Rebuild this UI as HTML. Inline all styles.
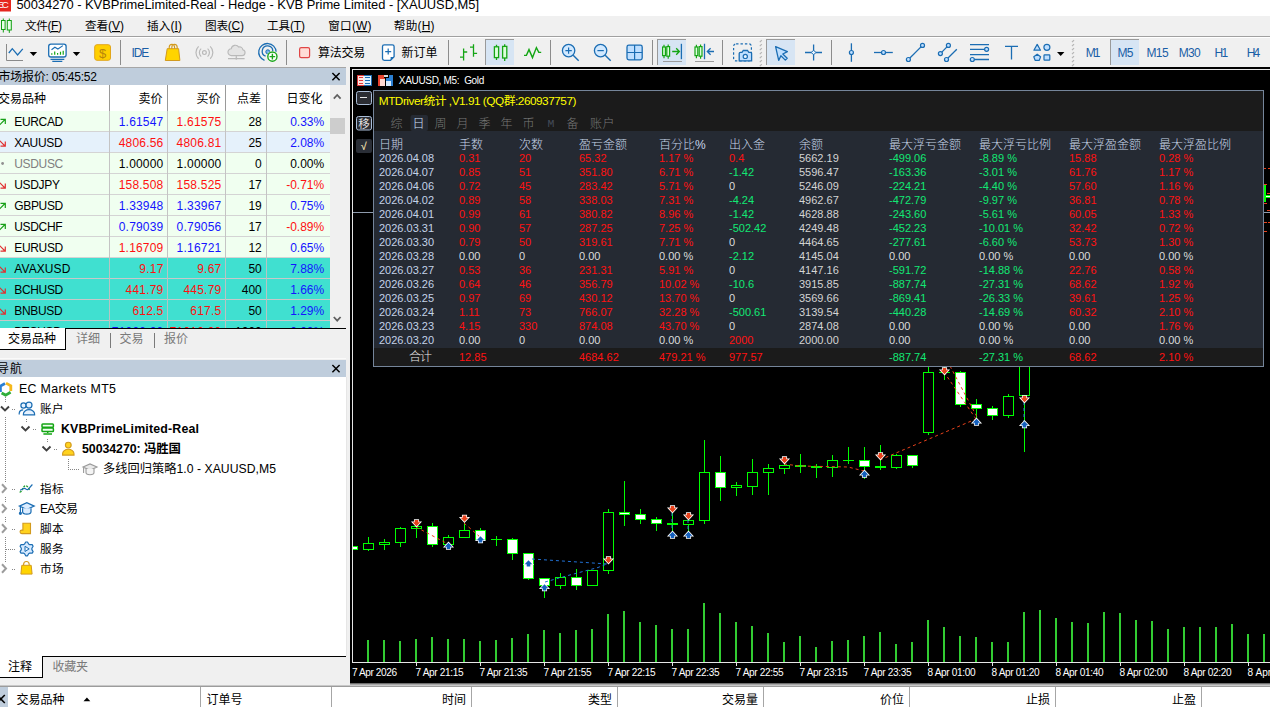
<!DOCTYPE html>
<html lang="zh-CN"><head><meta charset="utf-8"><title>50034270 - KVBPrimeLimited-Real - Hedge - KVB Prime Limited - [XAUUSD,M5]</title>
<style>html,body{margin:0;padding:0;background:#f0f0f0;overflow:hidden}body{width:1270px;height:707px}svg{display:block;font-family:"Liberation Sans","Noto Sans CJK SC",sans-serif}text{white-space:pre}</style></head>
<body>
<svg width="1270" height="707" viewBox="0 0 1270 707">
<rect x="0" y="0" width="1270" height="16" fill="#ffffff" />
<rect x="0" y="0" width="11" height="11.5" fill="#e5271f" />
<text x="-3" y="7.7" font-size="9.8" fill="#fff" textLength="11.8" lengthAdjust="spacing" >EC</text>
<text x="16.4" y="8.9" font-size="12.9" fill="#000" textLength="462.6" lengthAdjust="spacing" >50034270 - KVBPrimeLimited-Real - Hedge - KVB Prime Limited - [XAUUSD,M5]</text>
<rect x="0" y="16" width="1270" height="20" fill="#f0f0f0" />
<g fill="#e8ffe8" stroke="#12a012" stroke-width="1"><path d="M3.3 18.5v14M9.3 18.5v14.4" fill="none"/><rect x="1.5" y="20.5" width="3.6" height="9"/><rect x="7.3" y="20.5" width="4" height="9.5"/></g>
<text x="25" y="30" font-size="12" fill="#000" textLength="37" lengthAdjust="spacing" ><tspan font-size="11.6">文件</tspan>(<tspan text-decoration="underline">F</tspan>)</text>
<text x="85" y="30" font-size="12" fill="#000" textLength="39" lengthAdjust="spacing" ><tspan font-size="11.6">查看</tspan>(<tspan text-decoration="underline">V</tspan>)</text>
<text x="147" y="30" font-size="12" fill="#000" textLength="35" lengthAdjust="spacing" ><tspan font-size="11.6">插入</tspan>(<tspan text-decoration="underline">I</tspan>)</text>
<text x="205" y="30" font-size="12" fill="#000" textLength="39" lengthAdjust="spacing" ><tspan font-size="11.6">图表</tspan>(<tspan text-decoration="underline">C</tspan>)</text>
<text x="267" y="30" font-size="12" fill="#000" textLength="38" lengthAdjust="spacing" ><tspan font-size="11.6">工具</tspan>(<tspan text-decoration="underline">T</tspan>)</text>
<text x="328.3" y="30" font-size="12" fill="#000" textLength="43.3" lengthAdjust="spacing" ><tspan font-size="11.6">窗口</tspan>(<tspan text-decoration="underline">W</tspan>)</text>
<text x="393.8" y="30" font-size="12" fill="#000" textLength="40.8" lengthAdjust="spacing" ><tspan font-size="11.6">帮助</tspan>(<tspan text-decoration="underline">H</tspan>)</text>
<rect x="0" y="36" width="1270" height="1" fill="#a0a0a0" />
<rect x="0" y="37" width="1270" height="1" fill="#ffffff" />
<rect x="0" y="38" width="1270" height="29" fill="#f0f0f0" />
<path d="M6.5 44v16.5h16.5" stroke="#8a8a8a" stroke-width="1" fill="none"/>
<path d="M8.8 53l3.5 -4.3l5.3 6.2l5.2 -6" stroke="#1b6db3" stroke-width="1.3" fill="none"/>
<path d="M29.7 52l7.4 0l-3.7 4z" fill="#000"/>
<rect x="48.7" y="44.2" width="17.4" height="12.8" rx="2.2" fill="#fff" stroke="#1b6db3" stroke-width="1.3"/>
<path d="M50.5 59.4h13.8M52.3 61.3h10" stroke="#1b6db3" stroke-width="1.2" fill="none"/>
<path d="M51.5 49.8l3.4 -2.6l3 1.8l5 -3.4" stroke="#1b6db3" stroke-width="1.1" fill="none"/>
<path d="M51.8 54.8v-1.6M54.7 54.8v-3.2M57.6 54.8v-1.8M60.5 54.8v-3M63.2 54.8v-4" stroke="#14a514" stroke-width="1.2" fill="none"/>
<path d="M72.8 52l7.4 0l-3.7 4z" fill="#000"/>
<rect x="94.7" y="44.7" width="15.8" height="15.6" rx="2.3" fill="#ffcf00" stroke="#e2a61a" stroke-width="1"/>
<text x="102.6" y="57.6" font-size="13" fill="#b8860b" text-anchor="middle" >$</text>
<rect x="120" y="40" width="1" height="25" fill="#8c8c8c" />
<text x="131.6" y="56.9" font-size="12" fill="#1a5ea6" textLength="17.6" lengthAdjust="spacing" >IDE</text>
<path d="M169.2 49v-1.6a2.7 3 0 0 1 5.4 0v1.6M171.8 49v-1.6a2.7 3 0 0 1 5.4 0v1.6" stroke="#d29a1e" stroke-width="1.1" fill="none"/>
<path d="M167.2 48.7h11.4l1.3 11.8h-14.6z" fill="#ffd400" stroke="#d29a1e" stroke-width="1"/>
<g stroke="#b9b9b9" stroke-width="1.2" fill="none"><circle cx="204.4" cy="52.6" r="1.9"/><path d="M201.2 48.6a5.3 5.3 0 0 0 0 8M207.6 48.6a5.3 5.3 0 0 1 0 8M198.6 46.4a8.6 8.6 0 0 0 0 12.4M210.2 46.4a8.6 8.6 0 0 1 0 12.4"/></g>
<path d="M231.5 55.6a3.4 3.4 0 0 1 -0.3 -6.8a4.2 4.2 0 0 1 7.6 -1.7a3 3 0 0 1 4 2.6a3 3 0 0 1 -0.9 5.9z" fill="#e4e4e4" stroke="#b9b9b9" stroke-width="1.1"/>
<path d="M228 58.6h16.6M236.3 55.8v2.4" stroke="#b9b9b9" stroke-width="1.1" fill="none"/><circle cx="236.3" cy="58.6" r="1.1" fill="#b9b9b9"/>
<g stroke="#1b6db3" stroke-width="1.3" fill="none"><path d="M264.5 60.4a8.7 8.7 0 1 1 11.6 -8.6"/><path d="M265.6 56.2a5.3 5.3 0 1 1 7.2 -5.2"/></g>
<circle cx="267.8" cy="51.8" r="2" fill="#7db4ea" stroke="#1b6db3" stroke-width="1"/>
<circle cx="272.4" cy="56.6" r="5.6" fill="#fff"/><circle cx="272.4" cy="56.6" r="4.6" fill="#fff" stroke="#1aa51a" stroke-width="1.4"/>
<path d="M269.6 56.6h5.6M272.4 53.8v5.6" stroke="#1aa51a" stroke-width="1.4" fill="none"/>
<rect x="286" y="40" width="1" height="25" fill="#8c8c8c" />
<rect x="299.6" y="47.6" width="10" height="10" rx="1.6" fill="#ffdcd6" stroke="#e04545" stroke-width="1.2"/>
<text x="318" y="57" font-size="12" fill="#000" textLength="47.3" lengthAdjust="spacing" >算法交易</text>
<path d="M384.3 44.8h8a1.8 1.8 0 0 1 1.8 1.8v10.2l-3.6 3.6h-6.2a1.8 1.8 0 0 1 -1.8 -1.8v-12a1.8 1.8 0 0 1 1.8 -1.8z" fill="#fff" stroke="#1b6db3" stroke-width="1.3"/>
<path d="M394 57l-3.4 3.4v-3.4z" fill="#1b6db3"/>
<path d="M385.2 51.6h6M388.2 48.6v6" stroke="#1b6db3" stroke-width="1.2" fill="none"/>
<text x="401.5" y="57" font-size="12" fill="#000" textLength="36" lengthAdjust="spacing" >新订单</text>
<rect x="448" y="40" width="1" height="25" fill="#8c8c8c" />
<path d="M463.6 48.6v12M460 57.2h3.6M463.6 52h3.6M473.5 44.2v12.5M470 47.1h3.5M473.5 53.4h3.6" stroke="#14a514" stroke-width="1.3" fill="none"/>
<rect x="485" y="39" width="29" height="26" fill="#d7e5f4" />
<rect x="485" y="39" width="1" height="26" fill="#9a9a9a" />
<rect x="485" y="39" width="29" height="1" fill="#9a9a9a" />
<g stroke="#14a514" stroke-width="1.3" fill="#dcffdc"><path d="M496.5 44.8v15.2M504.7 44.2v16.8" fill="none"/><rect x="494.4" y="46.8" width="4.2" height="10.8"/><rect x="502.6" y="46.4" width="4.2" height="11.6"/></g>
<path d="M524 55.4h2.4l2.6 -5.8l3.5 8l3.9 -10l2.4 4.8h2.4" stroke="#14a514" stroke-width="1.4" fill="none"/>
<rect x="550" y="40" width="1" height="25" fill="#8c8c8c" />
<circle cx="568.6" cy="50.6" r="6.2" fill="#d2e9ff" stroke="#1b6db3" stroke-width="1.3"/>
<path d="M573.2 55.2l5.5 5.5" stroke="#1b6db3" stroke-width="1.4" fill="none"/>
<path d="M565.4 50.6h6.4M568.6 47.4v6.4" stroke="#1b6db3" stroke-width="1.2" fill="none"/>
<circle cx="600.6" cy="50.6" r="6.2" fill="#d2e9ff" stroke="#1b6db3" stroke-width="1.3"/>
<path d="M605.2 55.2l5.5 5.5" stroke="#1b6db3" stroke-width="1.4" fill="none"/>
<path d="M597.4 50.6h6.4" stroke="#1b6db3" stroke-width="1.2" fill="none"/>
<rect x="627" y="45.1" width="15.2" height="14.8" rx="1.8" fill="#bfdfff" stroke="#1b6db3" stroke-width="1.3"/>
<path d="M634.6 45.1v14.8M627 52.5h15.2" stroke="#1b6db3" stroke-width="1.2" fill="none"/>
<rect x="652" y="40" width="1" height="25" fill="#8c8c8c" />
<rect x="657" y="39" width="29" height="26" fill="#d7e5f4" />
<rect x="657" y="39" width="1" height="26" fill="#9a9a9a" />
<rect x="657" y="39" width="29" height="1" fill="#9a9a9a" />
<g stroke="#14a514" stroke-width="1.2" fill="#dcffdc"><path d="M664.0 44.8v13.4M668.2 44.4v14.4" fill="none"/><rect x="662.6" y="47" width="2.8" height="8.6"/><rect x="666.8000000000001" y="46.6" width="2.8" height="9.6"/></g>
<path d="M672.2 51.5h7M676.2 48.2l3.2 3.3l-3.2 3.3" stroke="#14a514" stroke-width="1.3" fill="none"/>
<path d="M681.4 43.8v15.4" stroke="#1b6db3" stroke-width="1.3" fill="none"/>
<rect x="663" y="61" width="19" height="1" fill="#9c9c9c" />
<g stroke="#14a514" stroke-width="1.2" fill="#dcffdc"><path d="M696.4 44.8v13.4M700.6 44.4v14.4" fill="none"/><rect x="695" y="47" width="2.8" height="8.6"/><rect x="699.2" y="46.6" width="2.8" height="9.6"/></g>
<path d="M704.5 43.8v15.4M714 51.5h-6.6M710.6 48.2l-3.3 3.3l3.3 3.3" stroke="#1b6db3" stroke-width="1.3" fill="none"/>
<rect x="695" y="61" width="19" height="1" fill="#9c9c9c" />
<rect x="722" y="40" width="1" height="25" fill="#8c8c8c" />
<rect x="733.6" y="43.9" width="17.8" height="17" rx="2.5" fill="none" stroke="#1b6db3" stroke-width="1.2" stroke-dasharray="2.4 2"/>
<path d="M739.2 60.8h12.4v-7.2a1.2 1.2 0 0 0 -1.2 -1.2h-1.6l-1.3 -1.9h-4.2l-1.3 1.9h-1.6a1.2 1.2 0 0 0 -1.2 1.2z" fill="#bfdfff" stroke="#1b6db3" stroke-width="1.3"/>
<circle cx="745.3" cy="56.4" r="2.1" fill="#e8f4ff" stroke="#1b6db3" stroke-width="1.2"/>
<path d="M759.8000000000001 42.2l2 -2" stroke="#b4b4b4" stroke-width="1.2" fill="none"/>
<path d="M759.8000000000001 46.2l2 -2" stroke="#b4b4b4" stroke-width="1.2" fill="none"/>
<path d="M759.8000000000001 50.2l2 -2" stroke="#b4b4b4" stroke-width="1.2" fill="none"/>
<path d="M759.8000000000001 54.2l2 -2" stroke="#b4b4b4" stroke-width="1.2" fill="none"/>
<path d="M759.8000000000001 58.2l2 -2" stroke="#b4b4b4" stroke-width="1.2" fill="none"/>
<path d="M759.8000000000001 62.2l2 -2" stroke="#b4b4b4" stroke-width="1.2" fill="none"/>
<path d="M759.8000000000001 66.2l2 -2" stroke="#b4b4b4" stroke-width="1.2" fill="none"/>
<rect x="766" y="39" width="29" height="26" fill="#d7e5f4" />
<rect x="766" y="39" width="1" height="26" fill="#9a9a9a" />
<rect x="766" y="39" width="29" height="1" fill="#9a9a9a" />
<path d="M775.6 46.6l11.8 5l-4.6 2.4l4.4 4.2l-1.9 1.9l-4.4 -4.3l-2.2 4.6z" fill="#bfdfff" stroke="#1b6db3" stroke-width="1.3" stroke-linejoin="round"/>
<path d="M805 52.5h17M813.6 44.4v16.2" stroke="#1b6db3" stroke-width="1.3" fill="none"/>
<path d="M813.6 50.2l2.3 2.3l-2.3 2.3l-2.3 -2.3z" fill="#e8f4ff" stroke="#1b6db3" stroke-width="1"/>
<rect x="831" y="40" width="1" height="25" fill="#8c8c8c" />
<path d="M851.4 43.3v18.5" stroke="#1b6db3" stroke-width="1.3" fill="none"/>
<circle cx="851.4" cy="52.5" r="2" fill="#bfdfff" stroke="#1b6db3" stroke-width="1.2"/>
<path d="M874 52.5h18.8" stroke="#1b6db3" stroke-width="1.3" fill="none"/>
<circle cx="883.5" cy="52.5" r="2" fill="#bfdfff" stroke="#1b6db3" stroke-width="1.2"/>
<path d="M908.4 59.5l14.1 -14.1" stroke="#1b6db3" stroke-width="1.3" fill="none"/>
<circle cx="908.4" cy="59.5" r="2" fill="#bfdfff" stroke="#1b6db3" stroke-width="1.2"/>
<circle cx="922.5" cy="45.4" r="2" fill="#bfdfff" stroke="#1b6db3" stroke-width="1.2"/>
<path d="M940.4 53.6l8 -8.2M946.5 59.5l10.3 -10.3" stroke="#1b6db3" stroke-width="1.3" fill="none"/>
<circle cx="940.4" cy="53.6" r="2" fill="#bfdfff" stroke="#1b6db3" stroke-width="1.2"/>
<circle cx="948.4" cy="45.4" r="2" fill="#bfdfff" stroke="#1b6db3" stroke-width="1.2"/>
<circle cx="946.5" cy="59.5" r="2" fill="#bfdfff" stroke="#1b6db3" stroke-width="1.2"/>
<path d="M970 44.6h19M970 49.3h15M970 54.6h19M974 59.5h15" stroke="#1b6db3" stroke-width="1.3" fill="none"/>
<circle cx="986.6" cy="49.3" r="2" fill="#bfdfff" stroke="#1b6db3" stroke-width="1.2"/>
<circle cx="972.3" cy="59.5" r="2" fill="#bfdfff" stroke="#1b6db3" stroke-width="1.2"/>
<path d="M1005 46.4h13M1011.5 46.4v13" stroke="#1b6db3" stroke-width="1.3" fill="none"/>
<g fill="#bfdfff" stroke="#1b6db3" stroke-width="1.2" stroke-linejoin="round"><path d="M1037.2 44.4l3.3 5.8h-6.6z"/><circle cx="1046.9" cy="47.3" r="3"/><path d="M1037.2 54.2l3.4 2.5l-1.3 3.6h-4.2l-1.3 -3.6z"/><rect x="1044" y="54.8" width="5.8" height="5.4" rx="0.6"/></g>
<path d="M1057 52l7.4 0l-3.7 4z" fill="#000"/>
<path d="M1072.0 42.2l2 -2" stroke="#b4b4b4" stroke-width="1.2" fill="none"/>
<path d="M1072.0 46.2l2 -2" stroke="#b4b4b4" stroke-width="1.2" fill="none"/>
<path d="M1072.0 50.2l2 -2" stroke="#b4b4b4" stroke-width="1.2" fill="none"/>
<path d="M1072.0 54.2l2 -2" stroke="#b4b4b4" stroke-width="1.2" fill="none"/>
<path d="M1072.0 58.2l2 -2" stroke="#b4b4b4" stroke-width="1.2" fill="none"/>
<path d="M1072.0 62.2l2 -2" stroke="#b4b4b4" stroke-width="1.2" fill="none"/>
<path d="M1072.0 66.2l2 -2" stroke="#b4b4b4" stroke-width="1.2" fill="none"/>
<rect x="1110" y="39" width="29" height="26" fill="#d7e5f4" />
<rect x="1110" y="39" width="1" height="26" fill="#9a9a9a" />
<rect x="1110" y="39" width="29" height="1" fill="#9a9a9a" />
<text x="1085.7" y="56.9" font-size="12" fill="#1a5ea6" textLength="14.8" lengthAdjust="spacing" >M1</text>
<text x="1117.4" y="56.9" font-size="12" fill="#1a5ea6" textLength="16.1" lengthAdjust="spacing" >M5</text>
<text x="1146.5" y="56.9" font-size="12" fill="#1a5ea6" textLength="22.1" lengthAdjust="spacing" >M15</text>
<text x="1178.7" y="56.9" font-size="12" fill="#1a5ea6" textLength="21.9" lengthAdjust="spacing" >M30</text>
<text x="1214.5" y="56.9" font-size="12" fill="#1a5ea6" textLength="13.8" lengthAdjust="spacing" >H1</text>
<text x="1246.7" y="56.9" font-size="12" fill="#1a5ea6" textLength="13.6" lengthAdjust="spacing" >H4</text>
<rect x="0" y="67" width="350" height="620" fill="#f0f0f0" />
<rect x="0" y="67" width="346" height="1" fill="#a6a6a6" />
<rect x="0" y="68" width="346" height="17" fill="#bfcddc" />
<text x="-1.5" y="81" font-size="12" fill="#000" textLength="98.5" lengthAdjust="spacing" >市场报价: 05:45:52</text>
<path d="M332.4 73.0l7.2 7.2M339.6 73.0l-7.2 7.2" stroke="#000" stroke-width="1.5" fill="none"/>
<rect x="0" y="85" width="330" height="243" fill="#ffffff" />
<clipPath id="mw"><rect x="0" y="85" width="330" height="243"/></clipPath><g clip-path="url(#mw)">
<text x="-2" y="103" font-size="12" fill="#000" textLength="48" lengthAdjust="spacing" >交易品种</text>
<text x="162.5" y="103" font-size="12" fill="#000" text-anchor="end" >卖价</text>
<text x="220.5" y="103" font-size="12" fill="#000" text-anchor="end" >买价</text>
<text x="261" y="103" font-size="12" fill="#000" text-anchor="end" >点差</text>
<text x="322.5" y="103" font-size="12" fill="#000" text-anchor="end" >日变化</text>
<rect x="109" y="85" width="1" height="26" fill="#9a9a9a" />
<rect x="167" y="85" width="1" height="26" fill="#9a9a9a" />
<rect x="225" y="85" width="1" height="26" fill="#9a9a9a" />
<rect x="266" y="85" width="1" height="26" fill="#9a9a9a" />
<rect x="0" y="111" width="330" height="21" fill="#f0fff0" />
<rect x="0" y="131" width="330" height="1" fill="#d4d4d4" />
<rect x="109" y="111" width="1" height="21" fill="#c4c4c4" />
<rect x="167" y="111" width="1" height="21" fill="#c4c4c4" />
<rect x="225" y="111" width="1" height="21" fill="#c4c4c4" />
<rect x="266" y="111" width="1" height="21" fill="#c4c4c4" />
<path d="M-1 125.5l6 -6M0.5 119.3h4.8v4.8" stroke="#18a018" stroke-width="1.2" fill="none"/>
<text x="14.3" y="126" font-size="12" fill="#000" letter-spacing="-0.35">EURCAD</text>
<text x="163.5" y="126" font-size="12" fill="#1414ff" text-anchor="end" letter-spacing="0.2">1.61547</text>
<text x="221.4" y="126" font-size="12" fill="#ff1010" text-anchor="end" letter-spacing="0.2">1.61575</text>
<text x="261.8" y="126" font-size="12" fill="#000" text-anchor="end" >28</text>
<text x="324.2" y="126" font-size="12" fill="#1414ff" text-anchor="end" >0.33%</text>
<rect x="0" y="132" width="330" height="21" fill="#e5f1fb" />
<rect x="0" y="152" width="330" height="1" fill="#d4d4d4" />
<rect x="109" y="132" width="1" height="21" fill="#c4c4c4" />
<rect x="167" y="132" width="1" height="21" fill="#c4c4c4" />
<rect x="225" y="132" width="1" height="21" fill="#c4c4c4" />
<rect x="266" y="132" width="1" height="21" fill="#c4c4c4" />
<path d="M-1 140l6 6M0.5 146.2h4.8v-4.8" stroke="#e03030" stroke-width="1.2" fill="none"/>
<text x="14.3" y="147" font-size="12" fill="#000" letter-spacing="-0.35">XAUUSD</text>
<text x="163.5" y="147" font-size="12" fill="#ff1010" text-anchor="end" letter-spacing="0.2">4806.56</text>
<text x="221.4" y="147" font-size="12" fill="#ff1010" text-anchor="end" letter-spacing="0.2">4806.81</text>
<text x="261.8" y="147" font-size="12" fill="#000" text-anchor="end" >25</text>
<text x="324.2" y="147" font-size="12" fill="#1414ff" text-anchor="end" >2.08%</text>
<rect x="0" y="153" width="330" height="21" fill="#f0fff0" />
<rect x="0" y="173" width="330" height="1" fill="#d4d4d4" />
<rect x="109" y="153" width="1" height="21" fill="#c4c4c4" />
<rect x="167" y="153" width="1" height="21" fill="#c4c4c4" />
<rect x="225" y="153" width="1" height="21" fill="#c4c4c4" />
<rect x="266" y="153" width="1" height="21" fill="#c4c4c4" />
<circle cx="2.6" cy="163.5" r="1.4" fill="#909090"/>
<text x="14.3" y="168" font-size="12" fill="#808080" letter-spacing="-0.35">USDUSC</text>
<text x="163.5" y="168" font-size="12" fill="#000" text-anchor="end" letter-spacing="0.2">1.00000</text>
<text x="221.4" y="168" font-size="12" fill="#000" text-anchor="end" letter-spacing="0.2">1.00000</text>
<text x="261.8" y="168" font-size="12" fill="#000" text-anchor="end" >0</text>
<text x="324.2" y="168" font-size="12" fill="#000" text-anchor="end" >0.00%</text>
<rect x="0" y="174" width="330" height="21" fill="#f0fff0" />
<rect x="0" y="194" width="330" height="1" fill="#d4d4d4" />
<rect x="109" y="174" width="1" height="21" fill="#c4c4c4" />
<rect x="167" y="174" width="1" height="21" fill="#c4c4c4" />
<rect x="225" y="174" width="1" height="21" fill="#c4c4c4" />
<rect x="266" y="174" width="1" height="21" fill="#c4c4c4" />
<path d="M-1 182l6 6M0.5 188.2h4.8v-4.8" stroke="#e03030" stroke-width="1.2" fill="none"/>
<text x="14.3" y="189" font-size="12" fill="#000" letter-spacing="-0.35">USDJPY</text>
<text x="163.5" y="189" font-size="12" fill="#ff1010" text-anchor="end" letter-spacing="0.2">158.508</text>
<text x="221.4" y="189" font-size="12" fill="#ff1010" text-anchor="end" letter-spacing="0.2">158.525</text>
<text x="261.8" y="189" font-size="12" fill="#000" text-anchor="end" >17</text>
<text x="324.2" y="189" font-size="12" fill="#ff1010" text-anchor="end" >-0.71%</text>
<rect x="0" y="195" width="330" height="21" fill="#f0fff0" />
<rect x="0" y="215" width="330" height="1" fill="#d4d4d4" />
<rect x="109" y="195" width="1" height="21" fill="#c4c4c4" />
<rect x="167" y="195" width="1" height="21" fill="#c4c4c4" />
<rect x="225" y="195" width="1" height="21" fill="#c4c4c4" />
<rect x="266" y="195" width="1" height="21" fill="#c4c4c4" />
<path d="M-1 209.5l6 -6M0.5 203.3h4.8v4.8" stroke="#18a018" stroke-width="1.2" fill="none"/>
<text x="14.3" y="210" font-size="12" fill="#000" letter-spacing="-0.35">GBPUSD</text>
<text x="163.5" y="210" font-size="12" fill="#1414ff" text-anchor="end" letter-spacing="0.2">1.33948</text>
<text x="221.4" y="210" font-size="12" fill="#1414ff" text-anchor="end" letter-spacing="0.2">1.33967</text>
<text x="261.8" y="210" font-size="12" fill="#000" text-anchor="end" >19</text>
<text x="324.2" y="210" font-size="12" fill="#1414ff" text-anchor="end" >0.75%</text>
<rect x="0" y="216" width="330" height="21" fill="#f0fff0" />
<rect x="0" y="236" width="330" height="1" fill="#d4d4d4" />
<rect x="109" y="216" width="1" height="21" fill="#c4c4c4" />
<rect x="167" y="216" width="1" height="21" fill="#c4c4c4" />
<rect x="225" y="216" width="1" height="21" fill="#c4c4c4" />
<rect x="266" y="216" width="1" height="21" fill="#c4c4c4" />
<path d="M-1 230.5l6 -6M0.5 224.3h4.8v4.8" stroke="#18a018" stroke-width="1.2" fill="none"/>
<text x="14.3" y="231" font-size="12" fill="#000" letter-spacing="-0.35">USDCHF</text>
<text x="163.5" y="231" font-size="12" fill="#1414ff" text-anchor="end" letter-spacing="0.2">0.79039</text>
<text x="221.4" y="231" font-size="12" fill="#1414ff" text-anchor="end" letter-spacing="0.2">0.79056</text>
<text x="261.8" y="231" font-size="12" fill="#000" text-anchor="end" >17</text>
<text x="324.2" y="231" font-size="12" fill="#ff1010" text-anchor="end" >-0.89%</text>
<rect x="0" y="237" width="330" height="21" fill="#f0fff0" />
<rect x="0" y="257" width="330" height="1" fill="#d4d4d4" />
<rect x="109" y="237" width="1" height="21" fill="#c4c4c4" />
<rect x="167" y="237" width="1" height="21" fill="#c4c4c4" />
<rect x="225" y="237" width="1" height="21" fill="#c4c4c4" />
<rect x="266" y="237" width="1" height="21" fill="#c4c4c4" />
<path d="M-1 245l6 6M0.5 251.2h4.8v-4.8" stroke="#e03030" stroke-width="1.2" fill="none"/>
<text x="14.3" y="252" font-size="12" fill="#000" letter-spacing="-0.35">EURUSD</text>
<text x="163.5" y="252" font-size="12" fill="#ff1010" text-anchor="end" letter-spacing="0.2">1.16709</text>
<text x="221.4" y="252" font-size="12" fill="#1414ff" text-anchor="end" letter-spacing="0.2">1.16721</text>
<text x="261.8" y="252" font-size="12" fill="#000" text-anchor="end" >12</text>
<text x="324.2" y="252" font-size="12" fill="#1414ff" text-anchor="end" >0.65%</text>
<rect x="0" y="258" width="330" height="21" fill="#40e0d0" />
<rect x="0" y="278" width="330" height="1" fill="#c8c8c8" />
<rect x="109" y="258" width="1" height="21" fill="#b8c4c2" />
<rect x="167" y="258" width="1" height="21" fill="#b8c4c2" />
<rect x="225" y="258" width="1" height="21" fill="#b8c4c2" />
<rect x="266" y="258" width="1" height="21" fill="#b8c4c2" />
<path d="M-1 266l6 6M0.5 272.2h4.8v-4.8" stroke="#e03030" stroke-width="1.2" fill="none"/>
<text x="14.3" y="273" font-size="12" fill="#000" textLength="56" lengthAdjust="spacing" >AVAXUSD</text>
<text x="163.5" y="273" font-size="12" fill="#ff1010" text-anchor="end" letter-spacing="0.2">9.17</text>
<text x="221.4" y="273" font-size="12" fill="#ff1010" text-anchor="end" letter-spacing="0.2">9.67</text>
<text x="261.8" y="273" font-size="12" fill="#000" text-anchor="end" >50</text>
<text x="324.2" y="273" font-size="12" fill="#1414ff" text-anchor="end" >7.88%</text>
<rect x="0" y="279" width="330" height="21" fill="#40e0d0" />
<rect x="0" y="299" width="330" height="1" fill="#c8c8c8" />
<rect x="109" y="279" width="1" height="21" fill="#b8c4c2" />
<rect x="167" y="279" width="1" height="21" fill="#b8c4c2" />
<rect x="225" y="279" width="1" height="21" fill="#b8c4c2" />
<rect x="266" y="279" width="1" height="21" fill="#b8c4c2" />
<path d="M-1 287l6 6M0.5 293.2h4.8v-4.8" stroke="#e03030" stroke-width="1.2" fill="none"/>
<text x="14.3" y="294" font-size="12" fill="#000" letter-spacing="-0.35">BCHUSD</text>
<text x="163.5" y="294" font-size="12" fill="#ff1010" text-anchor="end" letter-spacing="0.2">441.79</text>
<text x="221.4" y="294" font-size="12" fill="#ff1010" text-anchor="end" letter-spacing="0.2">445.79</text>
<text x="261.8" y="294" font-size="12" fill="#000" text-anchor="end" >400</text>
<text x="324.2" y="294" font-size="12" fill="#1414ff" text-anchor="end" >1.66%</text>
<rect x="0" y="300" width="330" height="21" fill="#40e0d0" />
<rect x="0" y="320" width="330" height="1" fill="#c8c8c8" />
<rect x="109" y="300" width="1" height="21" fill="#b8c4c2" />
<rect x="167" y="300" width="1" height="21" fill="#b8c4c2" />
<rect x="225" y="300" width="1" height="21" fill="#b8c4c2" />
<rect x="266" y="300" width="1" height="21" fill="#b8c4c2" />
<path d="M-1 308l6 6M0.5 314.2h4.8v-4.8" stroke="#e03030" stroke-width="1.2" fill="none"/>
<text x="14.3" y="315" font-size="12" fill="#000" letter-spacing="-0.35">BNBUSD</text>
<text x="163.5" y="315" font-size="12" fill="#ff1010" text-anchor="end" letter-spacing="0.2">612.5</text>
<text x="221.4" y="315" font-size="12" fill="#ff1010" text-anchor="end" letter-spacing="0.2">617.5</text>
<text x="261.8" y="315" font-size="12" fill="#000" text-anchor="end" >50</text>
<text x="324.2" y="315" font-size="12" fill="#1414ff" text-anchor="end" >1.29%</text>
<rect x="0" y="321" width="330" height="21" fill="#40e0d0" />
<rect x="0" y="341" width="330" height="1" fill="#c8c8c8" />
<rect x="109" y="321" width="1" height="21" fill="#b8c4c2" />
<rect x="167" y="321" width="1" height="21" fill="#b8c4c2" />
<rect x="225" y="321" width="1" height="21" fill="#b8c4c2" />
<rect x="266" y="321" width="1" height="21" fill="#b8c4c2" />
<path d="M-1 329l6 6M0.5 335.2h4.8v-4.8" stroke="#e03030" stroke-width="1.2" fill="none"/>
<text x="14.3" y="336" font-size="12" fill="#000" letter-spacing="-0.35">BTCUSD</text>
<text x="163.5" y="336" font-size="12" fill="#1414ff" text-anchor="end" letter-spacing="0.2">71000.00</text>
<text x="221.4" y="336" font-size="12" fill="#ff1010" text-anchor="end" letter-spacing="0.2">71010.00</text>
<text x="261.8" y="336" font-size="12" fill="#000" text-anchor="end" >1000</text>
<text x="324.2" y="336" font-size="12" fill="#1414ff" text-anchor="end" >0.00%</text>
</g>
<rect x="330" y="85" width="16" height="243" fill="#f0f0f0" />
<path d="M333.8 98.6l3.4 -3.6l3.4 3.6" stroke="#606060" stroke-width="1.8" fill="none"/>
<path d="M333.8 317l3.4 3.6l3.4 -3.6" stroke="#606060" stroke-width="1.8" fill="none"/>
<rect x="330" y="118" width="15" height="16" fill="#cdcdcd" />
<rect x="65" y="328" width="281" height="1" fill="#000" />
<rect x="0" y="328" width="65" height="21" fill="#ffffff" />
<rect x="65" y="328" width="1" height="22" fill="#000" />
<rect x="0" y="349" width="66" height="1" fill="#000" />
<text x="8" y="342.6" font-size="12" fill="#000" textLength="48" lengthAdjust="spacing" >交易品种</text>
<text x="76" y="342.6" font-size="12" fill="#7a7a7a" textLength="24" lengthAdjust="spacing" >详细</text>
<text x="119.6" y="342.6" font-size="12" fill="#7a7a7a" textLength="24" lengthAdjust="spacing" >交易</text>
<text x="164" y="342.6" font-size="12" fill="#7a7a7a" textLength="24" lengthAdjust="spacing" >报价</text>
<rect x="110" y="333" width="1" height="15" fill="#7a7a7a" />
<rect x="154" y="333" width="1" height="15" fill="#7a7a7a" />
<rect x="0" y="358" width="346" height="1" fill="#fafafa" />
<rect x="0" y="360" width="346" height="17" fill="#bfcddc" />
<text x="-3" y="373.4" font-size="12" fill="#000" textLength="25" lengthAdjust="spacing" >导航</text>
<path d="M332.4 365.0l7.2 7.2M339.6 365.0l-7.2 7.2" stroke="#000" stroke-width="1.5" fill="none"/>
<rect x="0" y="377" width="346" height="279" fill="#ffffff" />
<rect x="346" y="377" width="1" height="279" fill="#e6e6e6" />
<g transform="translate(0,0.5)">
<path d="M5.5 396V402" stroke="#858585" stroke-width="1" stroke-dasharray="1 1" fill="none" shape-rendering="crispEdges"/>
<path d="M5.5 416V482" stroke="#858585" stroke-width="1" stroke-dasharray="1 1" fill="none" shape-rendering="crispEdges"/>
<path d="M5.5 496V502" stroke="#858585" stroke-width="1" stroke-dasharray="1 1" fill="none" shape-rendering="crispEdges"/>
<path d="M5.5 516V522" stroke="#858585" stroke-width="1" stroke-dasharray="1 1" fill="none" shape-rendering="crispEdges"/>
<path d="M5.5 536V562" stroke="#858585" stroke-width="1" stroke-dasharray="1 1" fill="none" shape-rendering="crispEdges"/>
<path d="M12 408.5H16" stroke="#858585" stroke-width="1" stroke-dasharray="1 1" fill="none" shape-rendering="crispEdges"/>
<path d="M33 428.5H37" stroke="#858585" stroke-width="1" stroke-dasharray="1 1" fill="none" shape-rendering="crispEdges"/>
<path d="M54 448.5H58" stroke="#858585" stroke-width="1" stroke-dasharray="1 1" fill="none" shape-rendering="crispEdges"/>
<path d="M68 468.5H80" stroke="#858585" stroke-width="1" stroke-dasharray="1 1" fill="none" shape-rendering="crispEdges"/>
<path d="M68.5 458V468" stroke="#858585" stroke-width="1" stroke-dasharray="1 1" fill="none" shape-rendering="crispEdges"/>
<path d="M12 488.5H16" stroke="#858585" stroke-width="1" stroke-dasharray="1 1" fill="none" shape-rendering="crispEdges"/>
<path d="M12 508.5H16" stroke="#858585" stroke-width="1" stroke-dasharray="1 1" fill="none" shape-rendering="crispEdges"/>
<path d="M12 528.5H16" stroke="#858585" stroke-width="1" stroke-dasharray="1 1" fill="none" shape-rendering="crispEdges"/>
<path d="M6 548.5H16" stroke="#858585" stroke-width="1" stroke-dasharray="1 1" fill="none" shape-rendering="crispEdges"/>
<path d="M12 568.5H16" stroke="#858585" stroke-width="1" stroke-dasharray="1 1" fill="none" shape-rendering="crispEdges"/>
<path d="M26.5 418V422" stroke="#858585" stroke-width="1" stroke-dasharray="1 1" fill="none" shape-rendering="crispEdges"/>
<path d="M47.5 438V442" stroke="#858585" stroke-width="1" stroke-dasharray="1 1" fill="none" shape-rendering="crispEdges"/>
<g fill="none" stroke-width="2.8" stroke-linejoin="miter"><path d="M0.4 391.6V385.6L5 383" stroke="#2a7fd4"/><path d="M6 382.6L10.8 385.4V390.6" stroke="#f5b81c"/><path d="M10.6 391.8L5.6 394.6L1.6 392.4" stroke="#2fae3a"/></g>
<text x="19" y="392.6" font-size="12.4" fill="#000" textLength="97" lengthAdjust="spacing" >EC Markets MT5</text>
<path d="M1 406l4 4l4 -4" stroke="#404040" stroke-width="1.9" fill="none"/>
<g fill="#e6f2ff" stroke="#1b6db3" stroke-width="1.2"><circle cx="23.5" cy="405" r="2.6"/><path d="M19.2 414v-1.2a4.2 3.6 0 0 1 4 -3.4"/><circle cx="29" cy="404.6" r="3"/><path d="M23.4 414.4v-1a5.6 4.2 0 0 1 11.2 0v1z"/></g>
<text x="40" y="412.6" font-size="11.6" fill="#000" textLength="23.5" lengthAdjust="spacing" >账户</text>
<path d="M21.5 426l4 4l4 -4" stroke="#404040" stroke-width="1.9" fill="none"/>
<g stroke="#14a514" stroke-width="1.5" fill="#f2fff2"><rect x="42" y="423.4" width="11.4" height="3.4" rx="0.8"/><rect x="42" y="427.6" width="11.4" height="3.4" rx="0.8"/><path d="M47.7 431v1.6M43.4 433.4h8.6" fill="none"/></g>
<text x="61" y="432.6" font-size="12.4" fill="#000" font-weight="bold" textLength="138" lengthAdjust="spacing" >KVBPrimeLimited-Real</text>
<path d="M42.5 446l4 4l4 -4" stroke="#404040" stroke-width="1.9" fill="none"/>
<g fill="#ffd21e" stroke="#d29a1e" stroke-width="1.1"><circle cx="68.3" cy="444.6" r="2.9"/><path d="M62.6 454.6v-1.4a5.7 4.4 0 0 1 11.4 0v1.4z"/></g>
<text x="82" y="452.6" font-size="12.4" fill="#000" font-weight="bold" textLength="99" lengthAdjust="spacing" >50034270: 冯胜国</text>
<g stroke="#9a9a9a" stroke-width="1.1" fill="#e9e9e9"><path d="M83 466.6l7 -3.2l7 3.2l-7 3.2z"/><path d="M86 468.6v3.4a4 2.2 0 0 0 8 0v-3.4" fill="#f4f4f4"/><path d="M83.6 467v5.4" fill="none"/></g>
<text x="103" y="472.6" font-size="12.2" fill="#000" textLength="173" lengthAdjust="spacing" >多线回归策略1.0 - XAUUSD,M5</text>
<path d="M2 483.8l4 4.2l-4 4.2" stroke="#9c9c9c" stroke-width="2" fill="none"/>
<path d="M19.6 491.6c3 0 3.2 -6.4 6 -6.4s2.4 4 5 4" stroke="#1e9e2e" stroke-width="1.3" fill="none" stroke-dasharray="2.2 1"/><path d="M20 489.6c2.6 0 3.6 -3.2 6 -1s3.4 -2 6.4 -4.6" stroke="#1b6db3" stroke-width="1.2" fill="none"/>
<text x="40" y="492.6" font-size="11.6" fill="#000" textLength="23.5" lengthAdjust="spacing" >指标</text>
<path d="M2 503.8l4 4.2l-4 4.2" stroke="#9c9c9c" stroke-width="2" fill="none"/>
<g stroke="#1b6db3" stroke-width="1.2" fill="#dcedff"><path d="M19.4 505.6l7.4 -3.4l7.4 3.4l-7.4 3.4z"/><path d="M22.6 507.8v3.4a4.2 2.4 0 0 0 8.4 0v-3.4" /><path d="M20.4 506v6" fill="none"/><circle cx="20.4" cy="512.8" r="1" fill="#1b6db3"/></g>
<text x="40" y="512.6" font-size="12" fill="#000" textLength="38" lengthAdjust="spacing" >EA交易</text>
<path d="M2 523.8l4 4.2l-4 4.2" stroke="#9c9c9c" stroke-width="2" fill="none"/>
<path d="M22.9 522.8h7.6v10.3h-8.7a1.75 1.75 0 0 1 0 -3.5h1.1z" fill="#ffd21e" stroke="#d29a1e" stroke-width="1.1"/>
<text x="40" y="532.6" font-size="11.6" fill="#000" textLength="23.5" lengthAdjust="spacing" >脚本</text>
<path d="M25.7 541.5 L27.5 541.5 L28.6 543.5 L29.8 544.2 L32.2 544.1 L33.1 545.7 L31.9 547.7 L31.9 549.1 L33.1 551.1 L32.2 552.7 L29.8 552.6 L28.6 553.3 L27.5 555.3 L25.7 555.3 L24.6 553.3 L23.4 552.6 L21.0 552.7 L20.1 551.1 L21.3 549.1 L21.3 547.7 L20.1 545.7 L21.0 544.1 L23.4 544.2 L24.6 543.5z" fill="#d6eaff" stroke="#1b6db3" stroke-width="1.2" stroke-linejoin="round"/><path d="M25 545.8l4.2 2.6l-4.2 2.6z" fill="#eef6ff" stroke="#1b6db3" stroke-width="1"/>
<text x="40" y="552.6" font-size="11.6" fill="#000" textLength="23.5" lengthAdjust="spacing" >服务</text>
<path d="M2 563.8l4 4.2l-4 4.2" stroke="#9c9c9c" stroke-width="2" fill="none"/>
<path d="M23.6 565v-1a2.8 3 0 0 1 5.6 0v1" stroke="#d29a1e" stroke-width="1.1" fill="none"/><path d="M21.8 564.8h9.4l0.9 8.8h-11.2z" fill="#ffd400" stroke="#d29a1e" stroke-width="1"/>
<text x="40" y="572.6" font-size="11.6" fill="#000" textLength="23.5" lengthAdjust="spacing" >市场</text>
</g>
<rect x="42" y="656" width="304" height="1" fill="#000" />
<rect x="0" y="656" width="42" height="21" fill="#ffffff" />
<rect x="42" y="656" width="1" height="22" fill="#000" />
<rect x="0" y="677" width="43" height="1" fill="#000" />
<text x="8" y="671" font-size="12" fill="#000" textLength="24" lengthAdjust="spacing" >注释</text>
<text x="52.5" y="671" font-size="12" fill="#7a7a7a" textLength="35.5" lengthAdjust="spacing" >收藏夹</text>
<rect x="0" y="685" width="1270" height="1" fill="#c8c8c8" />
<rect x="0" y="686" width="1270" height="1" fill="#9c9c9c" />
<rect x="0" y="687" width="1270" height="20" fill="#ffffff" />
<rect x="0" y="687" width="8" height="20" fill="#bfcddc" />
<path d="M-3.2 695l8 8M4.8 695l-8 8" stroke="#000" stroke-width="1.6" fill="none"/>
<text x="16.5" y="704" font-size="12" fill="#000" textLength="48" lengthAdjust="spacing" >交易品种</text>
<path d="M83.5 701.2l3.4 -3.6l3.4 3.6z" fill="#000"/>
<text x="206.5" y="704" font-size="12" fill="#000" textLength="36" lengthAdjust="spacing" >订单号</text>
<text x="466" y="704" font-size="12" fill="#000" text-anchor="end" >时间</text>
<text x="612" y="704" font-size="12" fill="#000" text-anchor="end" >类型</text>
<text x="758" y="704" font-size="12" fill="#000" text-anchor="end" >交易量</text>
<text x="904" y="704" font-size="12" fill="#000" text-anchor="end" >价位</text>
<text x="1050" y="704" font-size="12" fill="#000" text-anchor="end" >止损</text>
<text x="1196" y="704" font-size="12" fill="#000" text-anchor="end" >止盈</text>
<rect x="200" y="687" width="1" height="20" fill="#a6a6a6" />
<rect x="331" y="687" width="1" height="20" fill="#a6a6a6" />
<rect x="471" y="687" width="1" height="20" fill="#a6a6a6" />
<rect x="617" y="687" width="1" height="20" fill="#a6a6a6" />
<rect x="763" y="687" width="1" height="20" fill="#a6a6a6" />
<rect x="909" y="687" width="1" height="20" fill="#a6a6a6" />
<rect x="1055" y="687" width="1" height="20" fill="#a6a6a6" />
<rect x="1201" y="687" width="1" height="20" fill="#a6a6a6" />
<rect x="350" y="67" width="920" height="616" fill="#000000" />
<rect x="350" y="683" width="920" height="1" fill="#6e6e6e" />
<rect x="350" y="684" width="920" height="1" fill="#a8a8a8" />
<rect x="352" y="69" width="1" height="594" fill="#e6e6e6" />
<rect x="352" y="69" width="918" height="1" fill="#e6e6e6" />
<rect x="352" y="662" width="918" height="1" fill="#e6e6e6" />
<g shape-rendering="crispEdges">
<rect x="353" y="546" width="5" height="4" fill="#00ff00" />
<rect x="353" y="547" width="4" height="2" fill="#fff" />
<rect x="368" y="537" width="1" height="14" fill="#00ff00" />
<rect x="363" y="543" width="11" height="7" fill="#00ff00" />
<rect x="364" y="544" width="9" height="5" fill="#000" />
<rect x="384" y="539" width="1" height="11" fill="#00ff00" />
<rect x="379" y="542" width="11" height="3" fill="#00ff00" />
<rect x="380" y="543" width="9" height="1" fill="#000" />
<rect x="400" y="527" width="1" height="20" fill="#00ff00" />
<rect x="395" y="528" width="11" height="15" fill="#00ff00" />
<rect x="396" y="529" width="9" height="13" fill="#000" />
<rect x="416" y="522" width="1" height="16" fill="#00ff00" />
<rect x="411" y="526" width="11" height="3" fill="#00ff00" />
<rect x="412" y="527" width="9" height="1" fill="#000" />
<rect x="432" y="523" width="1" height="24" fill="#00ff00" />
<rect x="427" y="526" width="11" height="19" fill="#00ff00" />
<rect x="428" y="527" width="9" height="17" fill="#fff" />
<rect x="448" y="535" width="1" height="10" fill="#00ff00" />
<rect x="443" y="537" width="11" height="8" fill="#00ff00" />
<rect x="444" y="538" width="9" height="6" fill="#000" />
<rect x="464" y="524" width="1" height="14" fill="#00ff00" />
<rect x="459" y="530" width="11" height="8" fill="#00ff00" />
<rect x="460" y="531" width="9" height="6" fill="#000" />
<rect x="480" y="528" width="1" height="12" fill="#00ff00" />
<rect x="475" y="530" width="11" height="10" fill="#00ff00" />
<rect x="476" y="531" width="9" height="8" fill="#fff" />
<rect x="496" y="536" width="1" height="10" fill="#00ff00" />
<rect x="491" y="539" width="11" height="1" fill="#00ff00" />
<rect x="512" y="538" width="1" height="22" fill="#00ff00" />
<rect x="507" y="539" width="11" height="15" fill="#00ff00" />
<rect x="508" y="540" width="9" height="13" fill="#fff" />
<rect x="528" y="553" width="1" height="27" fill="#00ff00" />
<rect x="523" y="553" width="11" height="26" fill="#00ff00" />
<rect x="524" y="554" width="9" height="24" fill="#fff" />
<rect x="544" y="578" width="1" height="20" fill="#00ff00" />
<rect x="539" y="578" width="11" height="8" fill="#00ff00" />
<rect x="540" y="579" width="9" height="6" fill="#fff" />
<rect x="560" y="573" width="1" height="16" fill="#00ff00" />
<rect x="555" y="577" width="11" height="9" fill="#00ff00" />
<rect x="556" y="578" width="9" height="7" fill="#000" />
<rect x="576" y="569" width="1" height="21" fill="#00ff00" />
<rect x="571" y="577" width="11" height="9" fill="#00ff00" />
<rect x="572" y="578" width="9" height="7" fill="#fff" />
<rect x="592" y="570" width="1" height="16" fill="#00ff00" />
<rect x="587" y="570" width="11" height="16" fill="#00ff00" />
<rect x="588" y="571" width="9" height="14" fill="#000" />
<rect x="608" y="509" width="1" height="65" fill="#00ff00" />
<rect x="603" y="512" width="11" height="59" fill="#00ff00" />
<rect x="604" y="513" width="9" height="57" fill="#000" />
<rect x="624" y="481" width="1" height="45" fill="#00ff00" />
<rect x="619" y="512" width="11" height="3" fill="#00ff00" />
<rect x="620" y="513" width="9" height="1" fill="#fff" />
<rect x="640" y="509" width="1" height="15" fill="#00ff00" />
<rect x="635" y="514" width="11" height="6" fill="#00ff00" />
<rect x="636" y="515" width="9" height="4" fill="#fff" />
<rect x="656" y="517" width="1" height="14" fill="#00ff00" />
<rect x="651" y="519" width="11" height="5" fill="#00ff00" />
<rect x="652" y="520" width="9" height="3" fill="#fff" />
<rect x="672" y="513" width="1" height="19" fill="#00ff00" />
<rect x="667" y="523" width="11" height="2" fill="#00ff00" />
<rect x="688" y="519" width="1" height="13" fill="#00ff00" />
<rect x="683" y="520" width="11" height="5" fill="#00ff00" />
<rect x="684" y="521" width="9" height="3" fill="#000" />
<rect x="704" y="440" width="1" height="84" fill="#00ff00" />
<rect x="699" y="472" width="11" height="49" fill="#00ff00" />
<rect x="700" y="473" width="9" height="47" fill="#000" />
<rect x="720" y="456" width="1" height="45" fill="#00ff00" />
<rect x="715" y="472" width="11" height="16" fill="#00ff00" />
<rect x="716" y="473" width="9" height="14" fill="#fff" />
<rect x="736" y="482" width="1" height="14" fill="#00ff00" />
<rect x="731" y="485" width="11" height="3" fill="#00ff00" />
<rect x="732" y="486" width="9" height="1" fill="#000" />
<rect x="752" y="459" width="1" height="36" fill="#00ff00" />
<rect x="747" y="472" width="11" height="15" fill="#00ff00" />
<rect x="748" y="473" width="9" height="13" fill="#000" />
<rect x="768" y="464" width="1" height="31" fill="#00ff00" />
<rect x="763" y="468" width="11" height="5" fill="#00ff00" />
<rect x="764" y="469" width="9" height="3" fill="#000" />
<rect x="784" y="463" width="1" height="11" fill="#00ff00" />
<rect x="779" y="465" width="11" height="4" fill="#00ff00" />
<rect x="780" y="466" width="9" height="2" fill="#000" />
<rect x="800" y="454" width="1" height="19" fill="#00ff00" />
<rect x="795" y="465" width="11" height="2" fill="#00ff00" />
<rect x="816" y="464" width="1" height="14" fill="#00ff00" />
<rect x="811" y="466" width="11" height="2" fill="#00ff00" />
<rect x="832" y="455" width="1" height="22" fill="#00ff00" />
<rect x="827" y="460" width="11" height="8" fill="#00ff00" />
<rect x="828" y="461" width="9" height="6" fill="#000" />
<rect x="848" y="447" width="1" height="17" fill="#00ff00" />
<rect x="843" y="460" width="11" height="1" fill="#00ff00" />
<rect x="864" y="447" width="1" height="32" fill="#00ff00" />
<rect x="859" y="460" width="11" height="7" fill="#00ff00" />
<rect x="860" y="461" width="9" height="5" fill="#fff" />
<rect x="880" y="445" width="1" height="25" fill="#00ff00" />
<rect x="875" y="466" width="11" height="2" fill="#00ff00" />
<rect x="896" y="454" width="1" height="15" fill="#00ff00" />
<rect x="891" y="455" width="11" height="13" fill="#00ff00" />
<rect x="892" y="456" width="9" height="11" fill="#000" />
<rect x="912" y="455" width="1" height="13" fill="#00ff00" />
<rect x="907" y="455" width="11" height="11" fill="#00ff00" />
<rect x="908" y="456" width="9" height="9" fill="#fff" />
<rect x="928" y="366" width="1" height="69" fill="#00ff00" />
<rect x="923" y="372" width="11" height="61" fill="#00ff00" />
<rect x="924" y="373" width="9" height="59" fill="#000" />
<rect x="944" y="366" width="1" height="14" fill="#00ff00" />
<rect x="939" y="372" width="11" height="1" fill="#00ff00" />
<rect x="960" y="371" width="1" height="36" fill="#00ff00" />
<rect x="955" y="372" width="11" height="33" fill="#00ff00" />
<rect x="956" y="373" width="9" height="31" fill="#fff" />
<rect x="976" y="399" width="1" height="20" fill="#00ff00" />
<rect x="971" y="404" width="11" height="5" fill="#00ff00" />
<rect x="972" y="405" width="9" height="3" fill="#fff" />
<rect x="992" y="406" width="1" height="14" fill="#00ff00" />
<rect x="987" y="408" width="11" height="8" fill="#00ff00" />
<rect x="988" y="409" width="9" height="6" fill="#fff" />
<rect x="1008" y="394" width="1" height="24" fill="#00ff00" />
<rect x="1003" y="396" width="11" height="20" fill="#00ff00" />
<rect x="1004" y="397" width="9" height="18" fill="#000" />
<rect x="1024" y="360" width="1" height="92" fill="#00ff00" />
<rect x="1019" y="360" width="11" height="36" fill="#00ff00" />
<rect x="1020" y="361" width="9" height="34" fill="#000" />
<rect x="367" y="640" width="2" height="22" fill="#32cd32" />
<rect x="383" y="640" width="2" height="22" fill="#32cd32" />
<rect x="399" y="641" width="2" height="21" fill="#32cd32" />
<rect x="415" y="639" width="2" height="23" fill="#32cd32" />
<rect x="431" y="637" width="2" height="25" fill="#32cd32" />
<rect x="447" y="639" width="2" height="23" fill="#32cd32" />
<rect x="463" y="639" width="2" height="23" fill="#32cd32" />
<rect x="479" y="641" width="2" height="21" fill="#32cd32" />
<rect x="495" y="640" width="2" height="22" fill="#32cd32" />
<rect x="511" y="638" width="2" height="24" fill="#32cd32" />
<rect x="527" y="634" width="2" height="28" fill="#32cd32" />
<rect x="543" y="630" width="2" height="32" fill="#32cd32" />
<rect x="559" y="633" width="2" height="29" fill="#32cd32" />
<rect x="575" y="630" width="2" height="32" fill="#32cd32" />
<rect x="591" y="629" width="2" height="33" fill="#32cd32" />
<rect x="607" y="614" width="2" height="48" fill="#32cd32" />
<rect x="623" y="611" width="2" height="51" fill="#32cd32" />
<rect x="639" y="622" width="2" height="40" fill="#32cd32" />
<rect x="655" y="625" width="2" height="37" fill="#32cd32" />
<rect x="671" y="629" width="2" height="33" fill="#32cd32" />
<rect x="687" y="629" width="2" height="33" fill="#32cd32" />
<rect x="703" y="603" width="2" height="59" fill="#32cd32" />
<rect x="719" y="613" width="2" height="49" fill="#32cd32" />
<rect x="735" y="622" width="2" height="40" fill="#32cd32" />
<rect x="751" y="626" width="2" height="36" fill="#32cd32" />
<rect x="767" y="633" width="2" height="29" fill="#32cd32" />
<rect x="783" y="642" width="2" height="20" fill="#32cd32" />
<rect x="799" y="636" width="2" height="26" fill="#32cd32" />
<rect x="815" y="647" width="2" height="15" fill="#32cd32" />
<rect x="831" y="641" width="2" height="21" fill="#32cd32" />
<rect x="847" y="640" width="2" height="22" fill="#32cd32" />
<rect x="863" y="636" width="2" height="26" fill="#32cd32" />
<rect x="879" y="632" width="2" height="30" fill="#32cd32" />
<rect x="895" y="644" width="2" height="18" fill="#32cd32" />
<rect x="911" y="642" width="2" height="20" fill="#32cd32" />
<rect x="927" y="620" width="2" height="42" fill="#32cd32" />
<rect x="943" y="627" width="2" height="35" fill="#32cd32" />
<rect x="959" y="636" width="2" height="26" fill="#32cd32" />
<rect x="975" y="637" width="2" height="25" fill="#32cd32" />
<rect x="991" y="642" width="2" height="20" fill="#32cd32" />
<rect x="1007" y="642" width="2" height="20" fill="#32cd32" />
<rect x="1023" y="612" width="2" height="50" fill="#32cd32" />
<rect x="1039" y="610" width="2" height="52" fill="#32cd32" />
<rect x="1055" y="618" width="2" height="44" fill="#32cd32" />
<rect x="1071" y="622" width="2" height="40" fill="#32cd32" />
<rect x="1087" y="623" width="2" height="39" fill="#32cd32" />
<rect x="1103" y="612" width="2" height="50" fill="#32cd32" />
<rect x="1119" y="613" width="2" height="49" fill="#32cd32" />
<rect x="1135" y="620" width="2" height="42" fill="#32cd32" />
<rect x="1151" y="621" width="2" height="41" fill="#32cd32" />
<rect x="1167" y="629" width="2" height="33" fill="#32cd32" />
<rect x="1183" y="627" width="2" height="35" fill="#32cd32" />
<rect x="1199" y="627" width="2" height="35" fill="#32cd32" />
<rect x="1215" y="627" width="2" height="35" fill="#32cd32" />
<rect x="1231" y="624" width="2" height="38" fill="#32cd32" />
<rect x="1247" y="634" width="2" height="28" fill="#32cd32" />
<rect x="1263" y="634" width="2" height="28" fill="#32cd32" />
<rect x="416" y="662" width="1" height="4" fill="#e6e6e6" />
<rect x="480" y="662" width="1" height="4" fill="#e6e6e6" />
<rect x="544" y="662" width="1" height="4" fill="#e6e6e6" />
<rect x="608" y="662" width="1" height="4" fill="#e6e6e6" />
<rect x="672" y="662" width="1" height="4" fill="#e6e6e6" />
<rect x="736" y="662" width="1" height="4" fill="#e6e6e6" />
<rect x="800" y="662" width="1" height="4" fill="#e6e6e6" />
<rect x="864" y="662" width="1" height="4" fill="#e6e6e6" />
<rect x="928" y="662" width="1" height="4" fill="#e6e6e6" />
<rect x="992" y="662" width="1" height="4" fill="#e6e6e6" />
<rect x="1056" y="662" width="1" height="4" fill="#e6e6e6" />
<rect x="1120" y="662" width="1" height="4" fill="#e6e6e6" />
<rect x="1184" y="662" width="1" height="4" fill="#e6e6e6" />
<rect x="1248" y="662" width="1" height="4" fill="#e6e6e6" />
</g>
<text x="352" y="675.5" font-size="10.1" fill="#fff" textLength="45" lengthAdjust="spacing" >7 Apr 2026</text>
<text x="415.6" y="675.5" font-size="10.1" fill="#fff" textLength="48" lengthAdjust="spacing" >7 Apr 21:15</text>
<text x="479.6" y="675.5" font-size="10.1" fill="#fff" textLength="48" lengthAdjust="spacing" >7 Apr 21:35</text>
<text x="543.6" y="675.5" font-size="10.1" fill="#fff" textLength="48" lengthAdjust="spacing" >7 Apr 21:55</text>
<text x="607.6" y="675.5" font-size="10.1" fill="#fff" textLength="48" lengthAdjust="spacing" >7 Apr 22:15</text>
<text x="671.6" y="675.5" font-size="10.1" fill="#fff" textLength="48" lengthAdjust="spacing" >7 Apr 22:35</text>
<text x="735.6" y="675.5" font-size="10.1" fill="#fff" textLength="48" lengthAdjust="spacing" >7 Apr 22:55</text>
<text x="799.6" y="675.5" font-size="10.1" fill="#fff" textLength="48" lengthAdjust="spacing" >7 Apr 23:15</text>
<text x="863.6" y="675.5" font-size="10.1" fill="#fff" textLength="48" lengthAdjust="spacing" >7 Apr 23:35</text>
<text x="927.6" y="675.5" font-size="10.1" fill="#fff" textLength="48" lengthAdjust="spacing" >8 Apr 01:00</text>
<text x="991.6" y="675.5" font-size="10.1" fill="#fff" textLength="48" lengthAdjust="spacing" >8 Apr 01:20</text>
<text x="1055.6" y="675.5" font-size="10.1" fill="#fff" textLength="48" lengthAdjust="spacing" >8 Apr 01:40</text>
<text x="1119.6" y="675.5" font-size="10.1" fill="#fff" textLength="48" lengthAdjust="spacing" >8 Apr 02:00</text>
<text x="1183.6" y="675.5" font-size="10.1" fill="#fff" textLength="48" lengthAdjust="spacing" >8 Apr 02:20</text>
<text x="1247.6" y="675.5" font-size="10.1" fill="#fff" >8 Apr 02:40</text>
<path d="M416 527 L448 544" stroke="#e8421c" stroke-width="1" fill="none" stroke-dasharray="3 3"/>
<path d="M464 523 L480 537" stroke="#e8421c" stroke-width="1" fill="none" stroke-dasharray="3 3"/>
<path d="M532 559 L570 561.5 L608 564" stroke="#2273d8" stroke-width="1" fill="none" stroke-dasharray="3 3"/>
<path d="M545 582 L568 575.5 L598 567.5 L608 563.5" stroke="#2273d8" stroke-width="1" fill="none" stroke-dasharray="3 3"/>
<path d="M672 513 L672 531" stroke="#2a7ad0" stroke-width="1" fill="none" stroke-dasharray="3 3"/>
<path d="M688 520 L688 531" stroke="#2a7ad0" stroke-width="1" fill="none" stroke-dasharray="3 3"/>
<path d="M784 464 L800 466 L848 467 L864 471" stroke="#e8421c" stroke-width="1" fill="none" stroke-dasharray="3 3"/>
<path d="M880 460 L896 453 L976 419" stroke="#e8421c" stroke-width="1" fill="none" stroke-dasharray="3 3"/>
<path d="M944 372 L976 419" stroke="#e8421c" stroke-width="1" fill="none" stroke-dasharray="3 3"/>
<path d="M950 366 L977 417" stroke="#e8421c" stroke-width="1" fill="none" stroke-dasharray="3 3"/>
<path d="M1024 402 L1024 421" stroke="#2a7ad0" stroke-width="1" fill="none" stroke-dasharray="3 3"/>
<path d="M414.7 520.1h3.6v2.2h2l-3.8 4l-3.8 -4h2z" fill="#e8421c" stroke="#fff" stroke-width="1.5" stroke-linejoin="miter" paint-order="stroke"/>
<path d="M462.7 515.6h3.6v2.2h2l-3.8 4l-3.8 -4h2z" fill="#e8421c" stroke="#fff" stroke-width="1.5" stroke-linejoin="miter" paint-order="stroke"/>
<path d="M606.7 557.1h3.6v2.2h2l-3.8 4l-3.8 -4h2z" fill="#e8421c" stroke="#fff" stroke-width="1.5" stroke-linejoin="miter" paint-order="stroke"/>
<path d="M670.7 506.1h3.6v2.2h2l-3.8 4l-3.8 -4h2z" fill="#e8421c" stroke="#fff" stroke-width="1.5" stroke-linejoin="miter" paint-order="stroke"/>
<path d="M686.7 513.1h3.6v2.2h2l-3.8 4l-3.8 -4h2z" fill="#e8421c" stroke="#fff" stroke-width="1.5" stroke-linejoin="miter" paint-order="stroke"/>
<path d="M782.7 457.1h3.6v2.2h2l-3.8 4l-3.8 -4h2z" fill="#e8421c" stroke="#fff" stroke-width="1.5" stroke-linejoin="miter" paint-order="stroke"/>
<path d="M878.7 453.1h3.6v2.2h2l-3.8 4l-3.8 -4h2z" fill="#e8421c" stroke="#fff" stroke-width="1.5" stroke-linejoin="miter" paint-order="stroke"/>
<path d="M942.7 368.1h3.6v2.2h2l-3.8 4l-3.8 -4h2z" fill="#e8421c" stroke="#fff" stroke-width="1.5" stroke-linejoin="miter" paint-order="stroke"/>
<path d="M1022.7 396.1h3.6v2.2h2l-3.8 4l-3.8 -4h2z" fill="#e8421c" stroke="#fff" stroke-width="1.5" stroke-linejoin="miter" paint-order="stroke"/>
<path d="M446.7 548.9h3.6v-2.2h2l-3.8 -4l-3.8 4h2z" fill="#1560bd" stroke="#fff" stroke-width="1.5" stroke-linejoin="miter" paint-order="stroke"/>
<path d="M478.7 542.4h3.6v-2.2h2l-3.8 -4l-3.8 4h2z" fill="#1560bd" stroke="#fff" stroke-width="1.5" stroke-linejoin="miter" paint-order="stroke"/>
<path d="M526.7 566.4h3.6v-2.2h2l-3.8 -4l-3.8 4h2z" fill="#1560bd" stroke="#fff" stroke-width="1.5" stroke-linejoin="miter" paint-order="stroke"/>
<path d="M542.7 590.4h3.6v-2.2h2l-3.8 -4l-3.8 4h2z" fill="#1560bd" stroke="#fff" stroke-width="1.5" stroke-linejoin="miter" paint-order="stroke"/>
<path d="M670.7 537.9h3.6v-2.2h2l-3.8 -4l-3.8 4h2z" fill="#1560bd" stroke="#fff" stroke-width="1.5" stroke-linejoin="miter" paint-order="stroke"/>
<path d="M686.7 537.9h3.6v-2.2h2l-3.8 -4l-3.8 4h2z" fill="#1560bd" stroke="#fff" stroke-width="1.5" stroke-linejoin="miter" paint-order="stroke"/>
<path d="M862.7 476.9h3.6v-2.2h2l-3.8 -4l-3.8 4h2z" fill="#1560bd" stroke="#fff" stroke-width="1.5" stroke-linejoin="miter" paint-order="stroke"/>
<path d="M974.7 424.9h3.6v-2.2h2l-3.8 -4l-3.8 4h2z" fill="#1560bd" stroke="#fff" stroke-width="1.5" stroke-linejoin="miter" paint-order="stroke"/>
<path d="M1022.7 427.4h3.6v-2.2h2l-3.8 -4l-3.8 4h2z" fill="#1560bd" stroke="#fff" stroke-width="1.5" stroke-linejoin="miter" paint-order="stroke"/>
<rect x="353" y="212" width="20" height="1" fill="#8e9aac" />
<rect x="1264" y="212" width="6" height="1" fill="#8e9aac" />
<g shape-rendering="crispEdges">
<rect x="1264" y="185" width="2" height="17" fill="#00ff00" />
<rect x="1264" y="195" width="6" height="3" fill="#00ff00" />
<rect x="1266" y="196" width="4" height="1" fill="#fff" />
<rect x="1264" y="168" width="2" height="1" fill="#e8421c" />
<rect x="1268" y="168" width="2" height="1" fill="#e8421c" />
<rect x="1264" y="184" width="3" height="1" fill="#e8421c" />
<rect x="1267" y="193" width="3" height="1" fill="#e8421c" />
<rect x="1264" y="203" width="3" height="1" fill="#e8421c" />
<rect x="1267" y="210" width="3" height="1" fill="#e8421c" />
<rect x="1264" y="222" width="3" height="1" fill="#e8421c" />
<rect x="1268" y="222" width="2" height="1" fill="#e8421c" />
<rect x="1264" y="231" width="3" height="1" fill="#e8421c" />
</g>
<g shape-rendering="crispEdges">
<rect x="357" y="75" width="7" height="11" fill="#ffe6e0" />
<rect x="357" y="75" width="7" height="1" fill="#e03a3a" />
<rect x="357" y="75" width="1" height="11" fill="#e03a3a" />
<rect x="357" y="85" width="7" height="1" fill="#e03a3a" />
<rect x="364" y="75" width="8" height="11" fill="#dcefff" />
<rect x="364" y="75" width="8" height="1" fill="#1b6db3" />
<rect x="371" y="75" width="1" height="11" fill="#1b6db3" />
<rect x="364" y="85" width="8" height="1" fill="#1b6db3" />
<rect x="359" y="77" width="4" height="1" fill="#e03a3a" />
<rect x="365" y="77" width="5" height="1" fill="#1b6db3" />
<rect x="359" y="80" width="4" height="1" fill="#e03a3a" />
<rect x="365" y="80" width="5" height="1" fill="#1b6db3" />
<rect x="359" y="83" width="4" height="1" fill="#e03a3a" />
<rect x="365" y="83" width="5" height="1" fill="#1b6db3" />
<rect x="378" y="75" width="7" height="11" fill="#e8432e" />
<rect x="380" y="79" width="5" height="7" fill="#ffd9d2" />
<rect x="386" y="75" width="7" height="11" fill="#2a7fd4" />
<rect x="386" y="81" width="5" height="5" fill="#d6ebff" />
<rect x="384" y="75" width="5" height="3" fill="#000" />
<rect x="384" y="75" width="4" height="2" fill="#dcdcdc" />
</g>
<text x="398.8" y="84.3" font-size="10" fill="#fff" textLength="85.5" lengthAdjust="spacing" >XAUUSD, M5:  Gold</text>
<rect x="373" y="90" width="891" height="277" fill="#75859a" />
<rect x="374" y="91" width="889" height="40" fill="#1b1b1b" />
<rect x="374" y="131" width="889" height="217" fill="#252a33" />
<rect x="374" y="348" width="889" height="18" fill="#1b1b1b" />
<rect x="356.5" y="91.5" width="15" height="13" rx="2" fill="#2b2d33" stroke="#a9bcd6" stroke-width="1"/>
<rect x="360" y="97" width="7" height="1" fill="#e8e8e8" />
<rect x="356.5" y="116.5" width="15" height="13.5" rx="2" fill="#2b2d33" stroke="#a9bcd6" stroke-width="1"/>
<text x="364" y="128" font-size="11.5" fill="#e0e0e0" text-anchor="middle" >移</text>
<rect x="356" y="139" width="16" height="14" rx="2" fill="#2a2e36"/>
<text x="364" y="150" font-size="10.5" fill="#e6d9a8" text-anchor="middle" font-weight="bold" >√</text>
<text x="378.8" y="105.2" font-size="11.8" fill="#ffff00" textLength="197.6" lengthAdjust="spacing" >MTDriver统计 ,V1.91 (QQ群:260937757)</text>
<rect x="410.5" y="115" width="17.5" height="16" rx="2" fill="#252a33"/>
<text x="396.5" y="128" font-size="12" fill="#787878" text-anchor="middle" font-weight="300" >综</text>
<text x="418.5" y="128" font-size="12" fill="#cfe0fa" text-anchor="middle" font-weight="300" >日</text>
<text x="440.5" y="128" font-size="12" fill="#787878" text-anchor="middle" font-weight="300" >周</text>
<text x="462.5" y="128" font-size="12" fill="#787878" text-anchor="middle" font-weight="300" >月</text>
<text x="484.5" y="128" font-size="12" fill="#787878" text-anchor="middle" font-weight="300" >季</text>
<text x="506.5" y="128" font-size="12" fill="#787878" text-anchor="middle" font-weight="300" >年</text>
<text x="528.5" y="128" font-size="12" fill="#787878" text-anchor="middle" font-weight="300" >币</text>
<text x="550.9" y="127.4" font-size="11.5" fill="#444c59" text-anchor="middle" font-family="Liberation Mono, monospace">M</text>
<text x="572.5" y="128" font-size="12" fill="#787878" text-anchor="middle" font-weight="300" >备</text>
<text x="590" y="128" font-size="12" fill="#787878" font-weight="300" textLength="24.6" lengthAdjust="spacing" >账户</text>
<text x="379" y="149" font-size="12" fill="#c8d6ea" font-weight="300" >日期</text>
<text x="459" y="149" font-size="12" fill="#c8d6ea" font-weight="300" >手数</text>
<text x="519" y="149" font-size="12" fill="#c8d6ea" font-weight="300" >次数</text>
<text x="579" y="149" font-size="12" fill="#c8d6ea" font-weight="300" >盈亏金额</text>
<text x="659" y="149" font-size="12" fill="#c8d6ea" font-weight="300" >百分比%</text>
<text x="729" y="149" font-size="12" fill="#c8d6ea" font-weight="300" >出入金</text>
<text x="799" y="149" font-size="12" fill="#c8d6ea" font-weight="300" >余额</text>
<text x="889" y="149" font-size="12" fill="#c8d6ea" font-weight="300" >最大浮亏金额</text>
<text x="979" y="149" font-size="12" fill="#c8d6ea" font-weight="300" >最大浮亏比例</text>
<text x="1069" y="149" font-size="12" fill="#c8d6ea" font-weight="300" >最大浮盈金额</text>
<text x="1159" y="149" font-size="12" fill="#c8d6ea" font-weight="300" >最大浮盈比例</text>
<text x="379" y="162" font-size="11" fill="#c3d2e8" >2026.04.08</text>
<text x="459" y="162" font-size="11" fill="#ff1212" >0.31</text>
<text x="519" y="162" font-size="11" fill="#ff1212" >20</text>
<text x="579" y="162" font-size="11" fill="#ff1212" >65.32</text>
<text x="659" y="162" font-size="11" fill="#ff1212" >1.17 %</text>
<text x="729" y="162" font-size="11" fill="#ff1212" >0.4</text>
<text x="799" y="162" font-size="11" fill="#d4d4d4" >5662.19</text>
<text x="889" y="162" font-size="11" fill="#12e874" >-499.06</text>
<text x="979" y="162" font-size="11" fill="#12e874" >-8.89 %</text>
<text x="1069" y="162" font-size="11" fill="#ff1212" >15.88</text>
<text x="1159" y="162" font-size="11" fill="#ff1212" >0.28 %</text>
<text x="379" y="176" font-size="11" fill="#c3d2e8" >2026.04.07</text>
<text x="459" y="176" font-size="11" fill="#ff1212" >0.85</text>
<text x="519" y="176" font-size="11" fill="#ff1212" >51</text>
<text x="579" y="176" font-size="11" fill="#ff1212" >351.80</text>
<text x="659" y="176" font-size="11" fill="#ff1212" >6.71 %</text>
<text x="729" y="176" font-size="11" fill="#12e874" >-1.42</text>
<text x="799" y="176" font-size="11" fill="#d4d4d4" >5596.47</text>
<text x="889" y="176" font-size="11" fill="#12e874" >-163.36</text>
<text x="979" y="176" font-size="11" fill="#12e874" >-3.01 %</text>
<text x="1069" y="176" font-size="11" fill="#ff1212" >61.76</text>
<text x="1159" y="176" font-size="11" fill="#ff1212" >1.17 %</text>
<text x="379" y="190" font-size="11" fill="#c3d2e8" >2026.04.06</text>
<text x="459" y="190" font-size="11" fill="#ff1212" >0.72</text>
<text x="519" y="190" font-size="11" fill="#ff1212" >45</text>
<text x="579" y="190" font-size="11" fill="#ff1212" >283.42</text>
<text x="659" y="190" font-size="11" fill="#ff1212" >5.71 %</text>
<text x="729" y="190" font-size="11" fill="#dcdcdc" >0</text>
<text x="799" y="190" font-size="11" fill="#d4d4d4" >5246.09</text>
<text x="889" y="190" font-size="11" fill="#12e874" >-224.21</text>
<text x="979" y="190" font-size="11" fill="#12e874" >-4.40 %</text>
<text x="1069" y="190" font-size="11" fill="#ff1212" >57.60</text>
<text x="1159" y="190" font-size="11" fill="#ff1212" >1.16 %</text>
<text x="379" y="204" font-size="11" fill="#c3d2e8" >2026.04.02</text>
<text x="459" y="204" font-size="11" fill="#ff1212" >0.89</text>
<text x="519" y="204" font-size="11" fill="#ff1212" >58</text>
<text x="579" y="204" font-size="11" fill="#ff1212" >338.03</text>
<text x="659" y="204" font-size="11" fill="#ff1212" >7.31 %</text>
<text x="729" y="204" font-size="11" fill="#12e874" >-4.24</text>
<text x="799" y="204" font-size="11" fill="#d4d4d4" >4962.67</text>
<text x="889" y="204" font-size="11" fill="#12e874" >-472.79</text>
<text x="979" y="204" font-size="11" fill="#12e874" >-9.97 %</text>
<text x="1069" y="204" font-size="11" fill="#ff1212" >36.81</text>
<text x="1159" y="204" font-size="11" fill="#ff1212" >0.78 %</text>
<text x="379" y="218" font-size="11" fill="#c3d2e8" >2026.04.01</text>
<text x="459" y="218" font-size="11" fill="#ff1212" >0.99</text>
<text x="519" y="218" font-size="11" fill="#ff1212" >61</text>
<text x="579" y="218" font-size="11" fill="#ff1212" >380.82</text>
<text x="659" y="218" font-size="11" fill="#ff1212" >8.96 %</text>
<text x="729" y="218" font-size="11" fill="#12e874" >-1.42</text>
<text x="799" y="218" font-size="11" fill="#d4d4d4" >4628.88</text>
<text x="889" y="218" font-size="11" fill="#12e874" >-243.60</text>
<text x="979" y="218" font-size="11" fill="#12e874" >-5.61 %</text>
<text x="1069" y="218" font-size="11" fill="#ff1212" >60.05</text>
<text x="1159" y="218" font-size="11" fill="#ff1212" >1.33 %</text>
<text x="379" y="232" font-size="11" fill="#c3d2e8" >2026.03.31</text>
<text x="459" y="232" font-size="11" fill="#ff1212" >0.90</text>
<text x="519" y="232" font-size="11" fill="#ff1212" >57</text>
<text x="579" y="232" font-size="11" fill="#ff1212" >287.25</text>
<text x="659" y="232" font-size="11" fill="#ff1212" >7.25 %</text>
<text x="729" y="232" font-size="11" fill="#12e874" >-502.42</text>
<text x="799" y="232" font-size="11" fill="#d4d4d4" >4249.48</text>
<text x="889" y="232" font-size="11" fill="#12e874" >-452.23</text>
<text x="979" y="232" font-size="11" fill="#12e874" >-10.01 %</text>
<text x="1069" y="232" font-size="11" fill="#ff1212" >32.42</text>
<text x="1159" y="232" font-size="11" fill="#ff1212" >0.72 %</text>
<text x="379" y="246" font-size="11" fill="#c3d2e8" >2026.03.30</text>
<text x="459" y="246" font-size="11" fill="#ff1212" >0.79</text>
<text x="519" y="246" font-size="11" fill="#ff1212" >50</text>
<text x="579" y="246" font-size="11" fill="#ff1212" >319.61</text>
<text x="659" y="246" font-size="11" fill="#ff1212" >7.71 %</text>
<text x="729" y="246" font-size="11" fill="#dcdcdc" >0</text>
<text x="799" y="246" font-size="11" fill="#d4d4d4" >4464.65</text>
<text x="889" y="246" font-size="11" fill="#12e874" >-277.61</text>
<text x="979" y="246" font-size="11" fill="#12e874" >-6.60 %</text>
<text x="1069" y="246" font-size="11" fill="#ff1212" >53.73</text>
<text x="1159" y="246" font-size="11" fill="#ff1212" >1.30 %</text>
<text x="379" y="260" font-size="11" fill="#c3d2e8" >2026.03.28</text>
<text x="459" y="260" font-size="11" fill="#dcdcdc" >0.00</text>
<text x="519" y="260" font-size="11" fill="#dcdcdc" >0</text>
<text x="579" y="260" font-size="11" fill="#dcdcdc" >0.00</text>
<text x="659" y="260" font-size="11" fill="#dcdcdc" >0.00 %</text>
<text x="729" y="260" font-size="11" fill="#12e874" >-2.12</text>
<text x="799" y="260" font-size="11" fill="#d4d4d4" >4145.04</text>
<text x="889" y="260" font-size="11" fill="#dcdcdc" >0.00</text>
<text x="979" y="260" font-size="11" fill="#dcdcdc" >0.00 %</text>
<text x="1069" y="260" font-size="11" fill="#dcdcdc" >0.00</text>
<text x="1159" y="260" font-size="11" fill="#dcdcdc" >0.00 %</text>
<text x="379" y="274" font-size="11" fill="#c3d2e8" >2026.03.27</text>
<text x="459" y="274" font-size="11" fill="#ff1212" >0.53</text>
<text x="519" y="274" font-size="11" fill="#ff1212" >36</text>
<text x="579" y="274" font-size="11" fill="#ff1212" >231.31</text>
<text x="659" y="274" font-size="11" fill="#ff1212" >5.91 %</text>
<text x="729" y="274" font-size="11" fill="#dcdcdc" >0</text>
<text x="799" y="274" font-size="11" fill="#d4d4d4" >4147.16</text>
<text x="889" y="274" font-size="11" fill="#12e874" >-591.72</text>
<text x="979" y="274" font-size="11" fill="#12e874" >-14.88 %</text>
<text x="1069" y="274" font-size="11" fill="#ff1212" >22.76</text>
<text x="1159" y="274" font-size="11" fill="#ff1212" >0.58 %</text>
<text x="379" y="288" font-size="11" fill="#c3d2e8" >2026.03.26</text>
<text x="459" y="288" font-size="11" fill="#ff1212" >0.64</text>
<text x="519" y="288" font-size="11" fill="#ff1212" >46</text>
<text x="579" y="288" font-size="11" fill="#ff1212" >356.79</text>
<text x="659" y="288" font-size="11" fill="#ff1212" >10.02 %</text>
<text x="729" y="288" font-size="11" fill="#12e874" >-10.6</text>
<text x="799" y="288" font-size="11" fill="#d4d4d4" >3915.85</text>
<text x="889" y="288" font-size="11" fill="#12e874" >-887.74</text>
<text x="979" y="288" font-size="11" fill="#12e874" >-27.31 %</text>
<text x="1069" y="288" font-size="11" fill="#ff1212" >68.62</text>
<text x="1159" y="288" font-size="11" fill="#ff1212" >1.92 %</text>
<text x="379" y="302" font-size="11" fill="#c3d2e8" >2026.03.25</text>
<text x="459" y="302" font-size="11" fill="#ff1212" >0.97</text>
<text x="519" y="302" font-size="11" fill="#ff1212" >69</text>
<text x="579" y="302" font-size="11" fill="#ff1212" >430.12</text>
<text x="659" y="302" font-size="11" fill="#ff1212" >13.70 %</text>
<text x="729" y="302" font-size="11" fill="#dcdcdc" >0</text>
<text x="799" y="302" font-size="11" fill="#d4d4d4" >3569.66</text>
<text x="889" y="302" font-size="11" fill="#12e874" >-869.41</text>
<text x="979" y="302" font-size="11" fill="#12e874" >-26.33 %</text>
<text x="1069" y="302" font-size="11" fill="#ff1212" >39.61</text>
<text x="1159" y="302" font-size="11" fill="#ff1212" >1.25 %</text>
<text x="379" y="316" font-size="11" fill="#c3d2e8" >2026.03.24</text>
<text x="459" y="316" font-size="11" fill="#ff1212" >1.11</text>
<text x="519" y="316" font-size="11" fill="#ff1212" >73</text>
<text x="579" y="316" font-size="11" fill="#ff1212" >766.07</text>
<text x="659" y="316" font-size="11" fill="#ff1212" >32.28 %</text>
<text x="729" y="316" font-size="11" fill="#12e874" >-500.61</text>
<text x="799" y="316" font-size="11" fill="#d4d4d4" >3139.54</text>
<text x="889" y="316" font-size="11" fill="#12e874" >-440.28</text>
<text x="979" y="316" font-size="11" fill="#12e874" >-14.69 %</text>
<text x="1069" y="316" font-size="11" fill="#ff1212" >60.32</text>
<text x="1159" y="316" font-size="11" fill="#ff1212" >2.10 %</text>
<text x="379" y="330" font-size="11" fill="#c3d2e8" >2026.03.23</text>
<text x="459" y="330" font-size="11" fill="#ff1212" >4.15</text>
<text x="519" y="330" font-size="11" fill="#ff1212" >330</text>
<text x="579" y="330" font-size="11" fill="#ff1212" >874.08</text>
<text x="659" y="330" font-size="11" fill="#ff1212" >43.70 %</text>
<text x="729" y="330" font-size="11" fill="#dcdcdc" >0</text>
<text x="799" y="330" font-size="11" fill="#d4d4d4" >2874.08</text>
<text x="889" y="330" font-size="11" fill="#dcdcdc" >0.00</text>
<text x="979" y="330" font-size="11" fill="#dcdcdc" >0.00 %</text>
<text x="1069" y="330" font-size="11" fill="#dcdcdc" >0.00</text>
<text x="1159" y="330" font-size="11" fill="#ff1212" >1.76 %</text>
<text x="379" y="344" font-size="11" fill="#c3d2e8" >2026.03.20</text>
<text x="459" y="344" font-size="11" fill="#dcdcdc" >0.00</text>
<text x="519" y="344" font-size="11" fill="#dcdcdc" >0</text>
<text x="579" y="344" font-size="11" fill="#dcdcdc" >0.00</text>
<text x="659" y="344" font-size="11" fill="#dcdcdc" >0.00 %</text>
<text x="729" y="344" font-size="11" fill="#ff1212" >2000</text>
<text x="799" y="344" font-size="11" fill="#d4d4d4" >2000.00</text>
<text x="889" y="344" font-size="11" fill="#dcdcdc" >0.00</text>
<text x="979" y="344" font-size="11" fill="#dcdcdc" >0.00 %</text>
<text x="1069" y="344" font-size="11" fill="#dcdcdc" >0.00</text>
<text x="1159" y="344" font-size="11" fill="#dcdcdc" >0.00 %</text>
<text x="409" y="361.4" font-size="12" fill="#e8e8e8" font-weight="300" textLength="23" lengthAdjust="spacing" >合计</text>
<text x="459" y="361" font-size="11" fill="#ff1212" >12.85</text>
<text x="579" y="361" font-size="11" fill="#ff1212" >4684.62</text>
<text x="659" y="361" font-size="11" fill="#ff1212" >479.21 %</text>
<text x="729" y="361" font-size="11" fill="#ff1212" >977.57</text>
<text x="889" y="361" font-size="11" fill="#12e874" >-887.74</text>
<text x="979" y="361" font-size="11" fill="#12e874" >-27.31 %</text>
<text x="1069" y="361" font-size="11" fill="#ff1212" >68.62</text>
<text x="1159" y="361" font-size="11" fill="#ff1212" >2.10 %</text>
</svg>
</body></html>
